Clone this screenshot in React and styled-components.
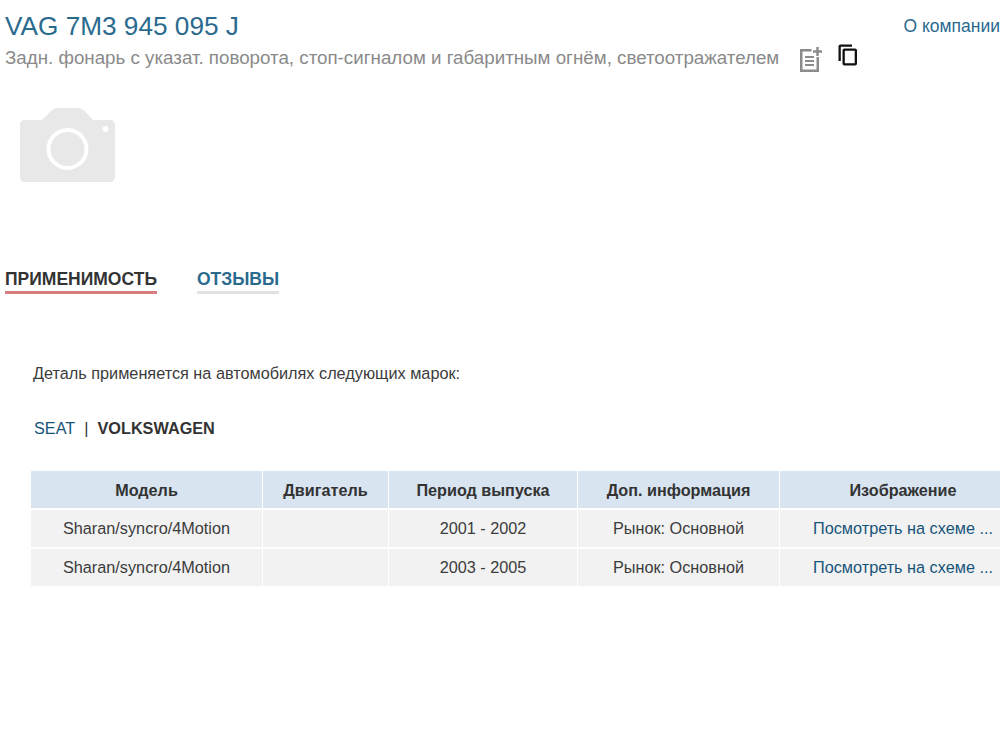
import React from "react";
import styled, { createGlobalStyle } from "styled-components";

const GlobalStyle = createGlobalStyle`
html, body {
  margin: 0;
  padding: 0;
  background: #fff;
  overflow: hidden;
}
body {
  font-family: "Liberation Sans", Arial, sans-serif;
  color: #333;
}
`;

const Page = styled.div`
  width: 1000px;
  height: 750px;
  overflow: hidden;
  box-sizing: border-box;
  padding: 11px 0 0 5px;
`;

const Header = styled.header`
  display: flex;
  justify-content: space-between;
  align-items: flex-start;
`;

const Title = styled.h1`
  margin: 0;
  font-size: 26.2px;
  line-height: 30px;
  font-weight: 400;
  color: #2a6a8f;
`;

const SubtitleRow = styled.div`
  display: flex;
  align-items: flex-start;
  margin-top: 2px;
`;

const Subtitle = styled.div`
  font-size: 18.75px;
  line-height: 30px;
  color: #8a8a8a;
  white-space: nowrap;
`;

const IconButton = styled.span`
  display: block;
  margin-left: ${({ $gap }) => $gap}px;
  margin-top: ${({ $top }) => $top}px;
  height: 28px;
`;

const CompanyLink = styled.a`
  font-size: 17.5px;
  line-height: 30px;
  color: #2a6a8f;
  white-space: nowrap;
`;

const Photo = styled.div`
  margin: 35px 0 0 15px;
  height: 75px;
`;

const Tabs = styled.nav`
  display: flex;
  gap: 40px;
  margin-top: 86px;
`;

const Tab = styled.a`
  font-size: 17.5px;
  line-height: 21px;
  font-weight: 700;
  padding-bottom: 1px;
  color: ${({ $active }) => ($active ? "#333" : "#2a6a8f")};
  border-bottom: 3px solid ${({ $active }) => ($active ? "#d87c7f" : "#e2e2e2")};
`;

const Content = styled.section`
  padding: 69px 0 0 26px;
`;

const Intro = styled.p`
  margin: 0 0 0 2px;
  font-size: 16.25px;
  line-height: 20px;
  color: #3c3c3c;
`;

const Brands = styled.div`
  margin: 35px 0 0 3px;
  font-size: 16.25px;
  line-height: 20px;
  color: #333;
`;

const BrandLink = styled.a`
  color: #17547a;
`;

const BrandCurrent = styled.b`
  font-weight: 700;
`;

const Divider = styled.span`
  margin: 0 9px;
`;

const Table = styled.table`
  table-layout: fixed;
  width: 996px;
  margin-top: 33px;
  border-collapse: separate;
  border-spacing: 0;
`;

const Th = styled.th`
  height: 39px;
  padding: 2px 0 0;
  box-sizing: border-box;
  background: #d8e4f0;
  color: #333;
  font-size: 16.2px;
  font-weight: 700;
  text-align: center;
  border-right: 1px solid #fff;
  border-bottom: 2px solid #fff;
`;

const Td = styled.td`
  height: 37px;
  padding: 0;
  background: #f2f2f2;
  color: #3c3c3c;
  font-size: 16.25px;
  text-align: center;
  border-right: 1px solid #fff;
  border-bottom: 2px solid #fff;
  white-space: nowrap;
  overflow: hidden;
  tr:last-child & {
    border-bottom: 0;
  }
`;

const SchemeLink = styled.a`
  color: #17547a;
`;

const columns = [
  { title: "Модель", width: 232 },
  { title: "Двигатель", width: 126 },
  { title: "Период выпуска", width: 189 },
  { title: "Доп. информация", width: 202 },
  { title: "Изображение", width: 247 },
];

const rows = [
  { model: "Sharan/syncro/4Motion", period: "2001 - 2002" },
  { model: "Sharan/syncro/4Motion", period: "2003 - 2005" },
];

const NoteIcon = () => (
  <svg width="24" height="28" viewBox="0 0 24 28">
    <path
      d="M12.500 4H1V27H20V12H17.500V24.500H3.500V6.500H12.500z"
      fill="#8c8c8c"
    />
    <path d="M6 11h9v2H6zM6 15h9v2H6zM6 19h9v2H6z" fill="#8c8c8c" />
    <path d="M17.250 2h2.500v3.250H23v2.500h-3.250V11h-2.500V7.750H14v-2.500h3.250z" fill="#8c8c8c" />
  </svg>
);

const CopyIcon = () => (
  <svg width="20" height="22" viewBox="0 0 20 22">
    <path d="M14 0.500H2.500C1.300 0.500 0.500 1.300 0.500 2.500V17H2.800V2.800H14z" fill="#111" />
    <path
      d="M17 4.500H6.500C5.300 4.500 4.500 5.300 4.500 6.500V19.500c0 1.200.8 2 2 2H17c1.200 0 2-.8 2-2V6.500c0-1.200-.8-2-2-2zM16.700 19.200H6.800V6.800h9.900z"
      fill="#111"
    />
  </svg>
);

const CameraIcon = () => (
  <svg width="95" height="75" viewBox="0 0 95 75">
    <path
      d="M5 12H22L30 4C32.500 1.500 34.500 0 37 0H58C61 0 63 1.500 65 3.500L73 12H90C93 12 95 14 95 17V69C95 72 93 74 90 74H5C2 74 0 72 0 69V17C0 14 2 12 5 12Z"
      fill="#e8e8e8"
    />
    <circle cx="47.500" cy="41" r="19" fill="none" stroke="#fff" strokeWidth="4" />
    <circle cx="85.500" cy="21" r="3" fill="#fff" />
  </svg>
);

const App = () => {
  return (
    <Page>
      <GlobalStyle />
      <Header>
        <div>
          <Title>VAG 7M3 945 095 J</Title>
          <SubtitleRow>
            <Subtitle>Задн. фонарь с указат. поворота, стоп-сигналом и габаритным огнём, светоотражателем</Subtitle>
            <IconButton $gap={20} $top={2}><NoteIcon /></IconButton>
            <IconButton $gap={15} $top={1}><CopyIcon /></IconButton>
          </SubtitleRow>
        </div>
        <CompanyLink>О компании</CompanyLink>
      </Header>

      <Photo><CameraIcon /></Photo>

      <Tabs>
        <Tab $active>ПРИМЕНИМОСТЬ</Tab>
        <Tab>ОТЗЫВЫ</Tab>
      </Tabs>

      <Content>
        <Intro>Деталь применяется на автомобилях следующих марок:</Intro>
        <Brands>
          <BrandLink>SEAT</BrandLink>
          <Divider>|</Divider>
          <BrandCurrent>VOLKSWAGEN</BrandCurrent>
        </Brands>
        <Table>
          <colgroup>
            {columns.map((col) => (
              <col key={col.title} width={col.width} />
            ))}
          </colgroup>
          <thead>
            <tr>
              {columns.map((col) => (
                <Th key={col.title}>{col.title}</Th>
              ))}
            </tr>
          </thead>
          <tbody>
            {rows.map((row) => (
              <tr key={row.period}>
                <Td>{row.model}</Td>
                <Td />
                <Td>{row.period}</Td>
                <Td>Рынок: Основной</Td>
                <Td><SchemeLink>Посмотреть на схеме ...</SchemeLink></Td>
              </tr>
            ))}
          </tbody>
        </Table>
      </Content>
    </Page>
  );
};

export default App;
